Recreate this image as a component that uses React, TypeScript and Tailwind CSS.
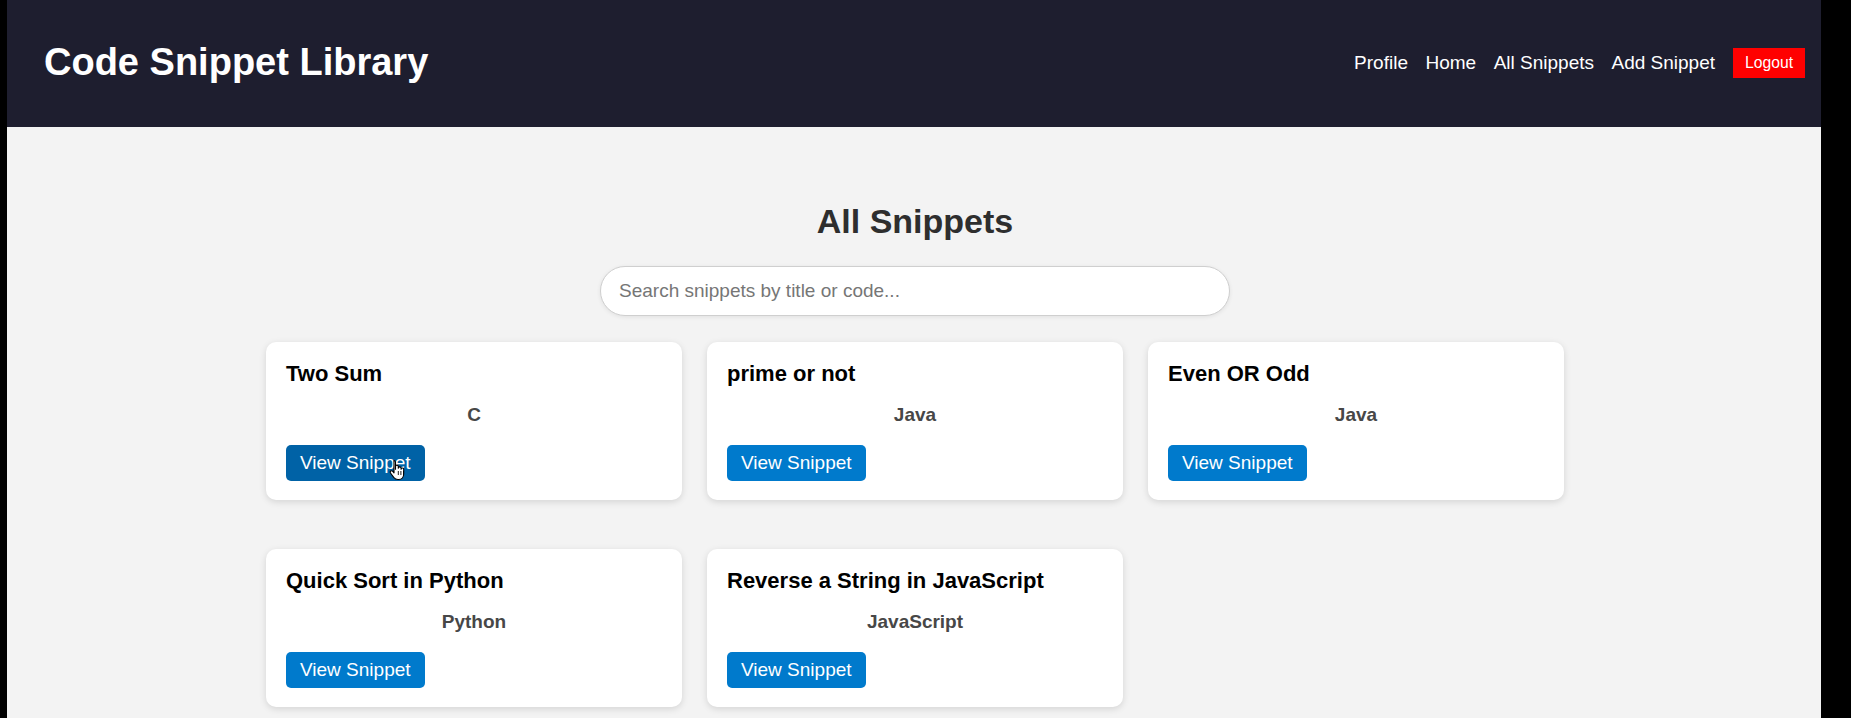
import React from "react";

const snippets = [
  { title: "Two Sum", lang: "C" },
  { title: "prime or not", lang: "Java" },
  { title: "Even OR Odd", lang: "Java" },
  { title: "Quick Sort in Python", lang: "Python" },
  { title: "Reverse a String in JavaScript", lang: "JavaScript" },
];

function HandCursor() {
  return (
    <svg
      width="18"
      height="22"
      viewBox="0 0 18 22"
      className="absolute left-[103px] top-[14px] pointer-events-none"
    >
      <path
        d="M5 1.5c.9 0 1.5.6 1.5 1.5v7.2V7.5c0-.8.6-1.4 1.4-1.4s1.4.6 1.4 1.4v1.8c0-.8.6-1.4 1.4-1.4s1.4.6 1.4 1.4v1c0-.8.6-1.3 1.3-1.3.8 0 1.3.6 1.3 1.3V15c0 3-2 5.5-5 5.5H9c-2 0-3.2-.8-4.3-2.2L1.5 14c-.5-.7-.4-1.6.3-2 .7-.4 1.5-.2 2 .4l1.2 1.5V3c0-.9.1-1.5 0-1.5z"
        fill="white"
        stroke="black"
        strokeWidth="1.1"
        strokeLinejoin="round"
      />
      <path d="M9.3 12v4M11.9 12v4M14.5 12v4" stroke="black" strokeWidth="0.9" />
    </svg>
  );
}

function Card({ title, lang, hovered }: { title: string; lang: string; hovered?: boolean }) {
  return (
    <div className="flex flex-col bg-white rounded-[10px] shadow-[0_2px_7px_rgba(0,0,0,0.13)] pt-[19px] pb-[19px] px-[20px]">
      <h3 className="text-[22px] font-bold leading-[25px] text-black">{title}</h3>
      <p className="mt-[18px] text-[19px] font-bold leading-[22px] text-[#474747] text-center">{lang}</p>
      <div className="relative mt-[19px] self-start">
        <button
          className={
            "h-[36px] px-[14px] rounded-[5px] text-white text-[19px] leading-[22px] " +
            (hovered ? "bg-[#0062a6]" : "bg-[#007acc]")
          }
        >
          View Snippet
        </button>
        {hovered && <HandCursor />}
      </div>
    </div>
  );
}

export default function App() {
  return (
    <div className="flex w-[1851px] h-[718px] overflow-hidden bg-black font-['Liberation_Sans',Arial,sans-serif]">
      <div className="ml-[7px] w-[1814px] h-full bg-[#f3f3f3] flex flex-col">
        <header className="h-[127px] shrink-0 bg-[#1e1e2f] flex items-center justify-between pl-[37px] pr-[16px]">
          <h1 className="-mt-[3px] text-[38px] font-bold text-white leading-[44px]">Code Snippet Library</h1>
          <nav className="-mt-[1px] flex items-center gap-[17.5px] text-[19px] text-white">
            <a>Profile</a>
            <a>Home</a>
            <a>All Snippets</a>
            <a>Add Snippet</a>
            <button className="ml-[0.5px] h-[30px] px-[12px] bg-[#ff0000] text-white text-[15.7px] leading-[18px]">
              Logout
            </button>
          </nav>
        </header>
        <main className="flex flex-col items-center pl-[2px]">
          <h2 className="mt-[75px] text-[34px] font-bold leading-[39px] text-[#2e2e2e]">All Snippets</h2>
          <input
            className="mt-[25px] w-[630px] h-[50px] rounded-full border border-[#cfcfcf] bg-white pl-[18px] text-[19px] text-[#333] shadow-[0_1px_4px_rgba(0,0,0,0.08)] outline-none placeholder:text-[#767676]"
            placeholder="Search snippets by title or code..."
          />
          <div className="mt-[26px] grid grid-cols-[repeat(3,416px)] gap-x-[25px] gap-y-[49px]">
            {snippets.map((s, i) => (
              <Card key={i} title={s.title} lang={s.lang} hovered={i === 0} />
            ))}
          </div>
        </main>
      </div>
    </div>
  );
}
